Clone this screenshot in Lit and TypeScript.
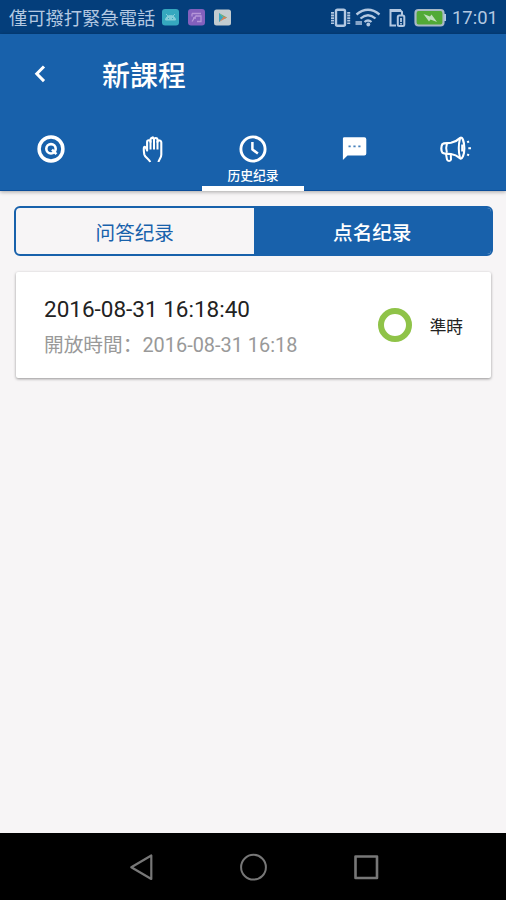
import { LitElement, html, css, svg } from "lit";
import { customElement, property } from "lit/decorators.js";

const tabIcons = {
  quiz: svg`<circle cx="16" cy="16" r="11.900" stroke-width="3.500"/><circle cx="16" cy="15.800" r="4.700" stroke-width="2.600"/><path d="M17 16.700l4.400 4.400" stroke-width="2.500"/>`,
  hand: svg`<path d="M14.200 29c-.8-2.700-5.200-4.500-5.900-7.600-.3-1.900-.8-5.500-.3-7.200.9-.8 2.400.5 3.100 3.400V9c0-2.400 3.400-2.400 3.400 0V6.700c0-2.400 3.500-2.400 3.500 0 0-2.300 3.500-2.300 3.500.3v2c0-2.400 3.800-2 3.800.6v12.200c0 3.300-2.500 4.600-2.800 7.200" stroke-width="2.100"/><path d="M14.500 7.500v9M18 6v10.500M21.500 8v8.500M15.800 4.600h2" stroke-width="2"/>`,
  clock: svg`<circle cx="16" cy="16" r="12.100" stroke-width="2.900"/><path d="M15.400 9v7.500l5.500 4" stroke-width="2.500"/>`,
  chat: svg`<path d="M6.300 4.200h20a2 2 0 0 1 2 2v14.300a2 2 0 0 1-2 2H9.500l-4.600 4.600V5.600a1.400 1.400 0 0 1 1.400-1.400z" fill="#fff" stroke="none"/><path d="M10.500 13.400h2.200M15.400 13.400h2.200M20.300 13.400h2.200" stroke="#1861ab" stroke-width="1.900" opacity=".8"/>`,
  horn: svg`<path d="M3.500 11c1.600-1.300 5.300-.5 8.500-1.200 3.700-.9 6.500-2.200 9.300-4.900 2-1.300 4 3.400 4 10.300s-2 11-4 10.200c-3-2.500-5.800-4-9.300-4.400-3-.4-6.900.4-8.500-1.200-1.600-2.200-1.600-6.600 0-8.800z" stroke-width="2.200"/><path d="M21 5.500c-1.400 5.500-1.400 14 0 19.300M7.900 10.800c-1 3-.9 6.300 0 9M7 21l1 5.600c.4 1.700 3.700 1.700 4 0l-.2-5.400M23.200 11.500v7" stroke-width="2"/><path d="M28.200 9.300l1.800-1M29.300 15.300h3.500M28.200 21.300l1.800 1" stroke-width="2.100"/>`,
};

@customElement("status-bar")
class StatusBar extends LitElement {
  static styles = css`
    :host { display: flex; align-items: center; height: 34px; padding: 2px 9px 0; box-sizing: border-box;
      background: #043e7b; color: #b3c8e1; font-family: Roboto, "Noto Sans CJK TC", sans-serif; }
    .carrier { font-size: 18.300px; line-height: 30px; width: 147px; white-space: nowrap; padding-top: 2px; }
    .apps { display: flex; gap: 9px; margin-left: 6px; margin-top: -1px; }
    .apps svg { width: 17px; height: 17px; display: block; }
    .system { margin-left: auto; margin-top: -1px; display: block; width: 116px; height: 22px; }
    .time { font-size: 18.400px; line-height: 30px; width: 45px; margin-left: 6px; white-space: nowrap; }
  `;
  render() {
    return html`
      <span class="carrier">僅可撥打緊急電話</span>
      <div class="apps">
        <svg viewBox="0 0 17 17"><rect width="17" height="16.500" rx="3" fill="#35a8bf"/><path d="M3.500 11a5 4.500 0 0 1 10 0zM4 5l2 2M13 5l-2 2" fill="#83cdd9" stroke="#83cdd9"/><path d="M6 9.500h1M10 9.500h1" stroke="#35a8bf"/></svg>
        <svg viewBox="0 0 17 17"><rect width="17" height="16.500" rx="3" fill="#8360bd"/><path d="M4 4.500h9M4 4.500v3M8 7h5v5.500H9M4 12.500l4-6M5 9h3" fill="none" stroke="#b595d8" stroke-width="1.300"/></svg>
        <svg viewBox="0 0 17 17"><rect y=".5" width="17" height="16" rx="2.500" fill="#c3ccd0"/><path d="M5 4v9l4-4.500z" fill="#3ba7c2"/><path d="M5 4l8 4.500-2.500 1.500z" fill="#63ae75"/><path d="M5 13l8-4.500-3.500-1z" fill="#d6835d"/><path d="M5 4v9l4-4.500z" fill="#3ba7c2"/></svg>
      </div>
      <svg class="system" viewBox="330 7 116 22" fill="none" stroke="#b3c8e1">
        <rect x="336" y="9.700" width="9" height="16" rx="1.500" stroke-width="2.400"/>
        <path d="M332.500 12v12M348.700 12v12" stroke-width="3" stroke-dasharray="1.800 .8"/>
        <path d="M356.500 14.500q11.500-9.500 23 0M360.500 18.500q7.500-6.500 15 0M364.500 22q3.500-3 7 0" stroke-width="2.300"/>
        <circle cx="368.300" cy="24.500" r="1.900" fill="#b3c8e1" stroke="none"/><path d="M355.500 23h6.500" stroke-width="4" opacity=".75"/>
        <path d="M396 25.500h-5.500v-15.500h9.500l2 2v3.500" stroke-width="2"/><path d="M390 10.500h11" stroke-width="3"/>
        <rect x="397.800" y="15.500" width="6.500" height="10.500" rx="1.500" stroke-width="2"/><path d="M401 18v4M401 23v1.500" stroke-width="1.800"/>
        <rect x="415.500" y="10" width="28" height="15.500" rx="3" fill="#52aa36" stroke-width="2.200" stroke="#a9b9c6"/>
        <path d="M445.200 14v7" stroke-width="2.200"/><path d="M423.500 14l6.500 2.500 1.500-2 5.500 7.500-6.500-2.500-1.500 2z" fill="#c1dfbe" stroke="none"/>
      </svg>
      <span class="time">17:01</span>`;
  }
}

@customElement("course-header")
class CourseHeader extends LitElement {
  static styles = css`
    :host { display: block; position: relative; height: 157px; background: #1861ab; color: #fff;
      border-bottom: 1px solid #0c4d99; box-sizing: border-box; box-shadow: 0 1px 4px #0005;
      font-family: Roboto, "Noto Sans CJK TC", sans-serif; }
    .bar { display: flex; align-items: center; height: 80px; }
    .back { width: 20px; height: 24px; margin-left: 30px; }
    .title { font-size: 28px; font-weight: 500; line-height: 40px; margin: 0 0 0 52px; padding-top: 5px; }
    .tabs { display: grid; grid-template-columns: repeat(5, 1fr); height: 77px; }
    .tab { display: flex; flex-direction: column; align-items: center; padding-top: 19px; box-sizing: border-box; }
    .tab svg { width: 32px; height: 32px; display: block; }
    .label { font: 500 12.800px/18px "Noto Sans CJK SC", sans-serif; white-space: nowrap; margin-top: 1px; }
    .active { border-bottom: 5px solid #fff; }
  `;
  render() {
    return html`
      <div class="bar">
        <svg class="back" viewBox="0 0 20 24" fill="none" stroke="#fff" stroke-width="3"><path d="M14 4.500l-7.200 7.300 7.200 7.300"/></svg>
        <h1 class="title">新課程</h1>
      </div>
      <nav class="tabs">
        ${Object.entries(tabIcons).map(([name, icon]) => html`
          <div class="tab ${name === "clock" ? "active" : ""}">
            <svg viewBox="0 0 32 32" fill="none" stroke="#fff" stroke-linejoin="round">${icon}</svg>
            ${name === "clock" ? html`<span class="label">历史纪录</span>` : ""}
          </div>`)}
      </nav>`;
  }
}

@customElement("record-card")
class RecordCard extends LitElement {
  @property() checked = "";
  @property() opened = "";
  @property() status = "";
  static styles = css`
    :host { display: flex; align-items: center; height: 106px; box-sizing: border-box; padding: 0 28px;
      margin: 16px 15px 0 16px; background: #fff; border-radius: 2px; box-shadow: 0 1px 3px #0006;
      font-family: Roboto, "Noto Sans CJK SC", sans-serif; white-space: nowrap; }
    .times { flex: 1; padding-top: 5px; }
    .checked { font-size: 22.500px; line-height: 35px; color: #222; }
    .opened { font-size: 19.700px; line-height: 37px; color: #999; }
    .date { font-size: 19.900px; }
    .ring { width: 34px; height: 34px; box-sizing: border-box; border: 6.500px solid #8fc348; border-radius: 50%; }
    .status { margin-left: 18px; padding-top: 2px; font: 16.700px/24px "Noto Sans CJK TC", sans-serif; color: #222; }
  `;
  render() {
    return html`
      <div class="times">
        <div class="checked">${this.checked}</div>
        <div class="opened">開放時間：<span class="date">${this.opened}</span></div>
      </div>
      <div class="ring"></div>
      <div class="status">${this.status}</div>`;
  }
}

@customElement("app-root")
class AppRoot extends LitElement {
  static styles = css`
    :host { display: flex; flex-direction: column; height: 900px; background: #f7f5f6; overflow: hidden; }
    .content { flex: 1; }
    .segments { display: flex; height: 50px; box-sizing: border-box; margin: 15px 13px 0 14px;
      border: 2px solid #1861ab; border-radius: 6px; overflow: hidden; }
    .segment { flex: 1; text-align: center; font: 19.600px/47px "Noto Sans CJK SC", sans-serif; color: #1861ab; }
    .selected { background: #1861ab; color: #fff; font-weight: 500; }
    .system-nav { display: flex; justify-content: center; align-items: center; gap: 81px; height: 67px; background: #000; }
    .system-nav svg { width: 32px; height: 32px; display: block; }
  `;
  render() {
    return html`
      <status-bar></status-bar>
      <course-header></course-header>
      <main class="content">
        <div class="segments">
          <div class="segment">问答纪录</div>
          <div class="segment selected">点名纪录</div>
        </div>
        <record-card checked="2016-08-31 16:18:40" opened="2016-08-31 16:18" status="準時"></record-card>
      </main>
      <div class="system-nav">
        <svg viewBox="0 0 32 32" fill="none" stroke="#777" stroke-width="2.200" stroke-linejoin="round"><path d="M27.300 4.500v23.500L7.300 16.200z"/></svg>
        <svg viewBox="0 0 32 32" fill="none" stroke="#777" stroke-width="2"><circle cx="16.500" cy="16.200" r="12.400"/></svg>
        <svg viewBox="0 0 32 32" fill="none" stroke="#777" stroke-width="2.600" stroke-linejoin="round"><rect x="5.500" y="5.500" width="21.500" height="21.500"/></svg>
      </div>`;
  }
}
